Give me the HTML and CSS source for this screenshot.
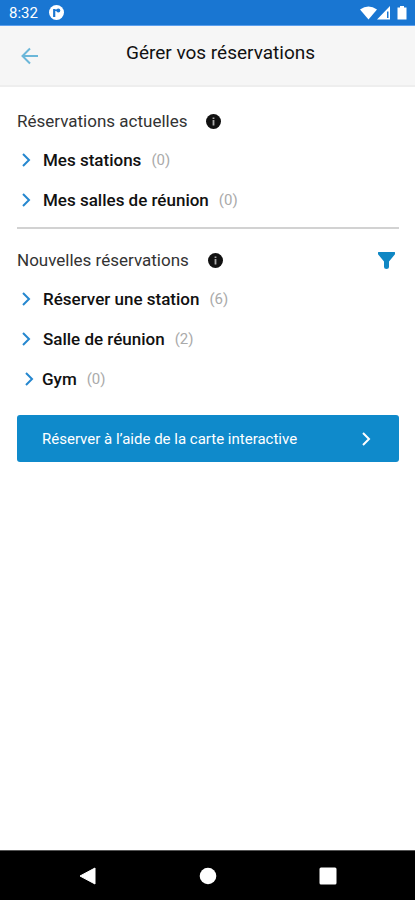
FILE: index.html
```html
<!DOCTYPE html>
<html lang="fr">
<head>
<meta charset="utf-8">
<meta name="viewport" content="width=device-width, initial-scale=1">
<title>Gérer vos réservations</title>
<link rel="stylesheet" href="styles.css">
</head>
<body>
<div class="status">
  <span class="time">8:32</span>
  <svg class="app-badge" width="15" height="15" viewBox="0 0 15 15"><circle cx="7.500" cy="7.500" r="7.500" fill="#fff"/><path d="M5.200 12V4" fill="none" stroke="#1976d2" stroke-width="2.200"/><path d="M6 5.200h2" stroke="#1976d2" stroke-width="1.500"/><circle cx="9.300" cy="5.600" r="2" fill="#1976d2"/></svg>
  <svg class="signals" width="48" height="14" viewBox="0 0 48 14" fill="#fff"><path d="M0 3.500Q8.500-2.500 17 3.500L8.500 13.500z"/><path d="M30 0V13.500H17zM27 5.500V12h1.500V5.500z" fill-rule="evenodd"/><path d="M40 0h4v1.500h2.500V13.500h-9V1.500H40z"/></svg>
</div>
<header class="header">
  <button class="back" type="button" aria-label="Retour"><svg width="18" height="18" viewBox="0 0 18 18"><path d="M17 9H2M9 1.500L1.500 9 9 16.500" fill="none" stroke="#6bb7d9" stroke-width="2"/></svg></button>
  <h1>Gérer vos réservations</h1>
</header>
<main>
  <section>
    <div class="heading">
      <h2>Réservations actuelles</h2>
      <button class="icon" type="button" aria-label="Informations"><svg width="15" height="15" viewBox="0 0 15 15"><circle cx="7.500" cy="7.500" r="7.500" fill="#111"/><path d="M7.500 3.500v1.500M7.500 6v5.500" fill="none" stroke="#aaa" stroke-width="1.800"/></svg></button>
    </div>
    <ul>
      <li><a href="#"><svg class="chevron" width="9" height="14" viewBox="0 0 9 14"><path d="M1 1l6 6-6 6"/></svg><b>Mes stations</b><span>(0)</span></a></li>
      <li><a href="#"><svg class="chevron" width="9" height="14" viewBox="0 0 9 14"><path d="M1 1l6 6-6 6"/></svg><b>Mes salles de réunion</b><span>(0)</span></a></li>
    </ul>
  </section>
  <hr>
  <section>
    <div class="heading">
      <h2>Nouvelles réservations</h2>
      <button class="icon" type="button" aria-label="Informations"><svg width="15" height="15" viewBox="0 0 15 15"><circle cx="7.500" cy="7.500" r="7.500" fill="#111"/><path d="M7.500 3.500v1.500M7.500 6v5.500" fill="none" stroke="#aaa" stroke-width="1.800"/></svg></button>
      <button class="icon filter" type="button" aria-label="Filtrer"><svg width="17" height="17" viewBox="0 0 17 17"><path d="M.5 0h16q.5 0 .5.500v1.700L11 9.500V15q0 2-2.500 2T6 15V9.500L0 2.200V.5Q0 0 .5 0z" fill="#0f87c4"/></svg></button>
    </div>
    <ul>
      <li><a href="#"><svg class="chevron" width="9" height="14" viewBox="0 0 9 14"><path d="M1 1l6 6-6 6"/></svg><b>Réserver une station</b><span>(6)</span></a></li>
      <li><a href="#"><svg class="chevron" width="9" height="14" viewBox="0 0 9 14"><path d="M1 1l6 6-6 6"/></svg><b>Salle de réunion</b><span>(2)</span></a></li>
      <li><a class="compact" href="#"><svg class="chevron" width="9" height="14" viewBox="0 0 9 14"><path d="M1 1l6 6-6 6"/></svg><b>Gym</b><span>(0)</span></a></li>
    </ul>
  </section>
  <button class="map" type="button">Réserver à l’aide de la carte interactive<svg class="chevron" width="9" height="14" viewBox="0 0 9 14"><path d="M1 1l6 6-6 6"/></svg></button>
</main>
<nav class="system">
  <button type="button" aria-label="Précédent"><svg width="18" height="18" viewBox="0 0 18 18"><path d="M16 1v16L1 9z" fill="#fff" stroke="#fff" stroke-linejoin="round"/></svg></button>
  <button type="button" aria-label="Accueil"><svg width="18" height="18" viewBox="0 0 18 18"><circle cx="9" cy="9" r="8.300" fill="#fff"/></svg></button>
  <button type="button" aria-label="Applications récentes"><svg width="18" height="18" viewBox="0 0 18 18"><rect x=".5" y=".5" width="17" height="17" rx="1.500" fill="#fff"/></svg></button>
</nav>
</body>
</html>
```
FILE: styles.css
```css
* { box-sizing: border-box; }
body {
  margin: 0;
  min-height: 100vh;
  display: flex;
  flex-direction: column;
  background: #fff;
  color: #111;
  font-family: Roboto, sans-serif;
  font-size: 16px;
}
button {
  padding: 0;
  border: 0;
  background: none;
  font: inherit;
  cursor: pointer;
}
svg { display: block; flex: none; }
h1, h2, ul { margin: 0; padding: 0; }
.status {
  display: flex;
  align-items: center;
  height: 26px;
  padding: 0 7px 0 9px;
  border-bottom: 1px solid #5b9fee;
  background: #1976d2;
  color: #fff;
}
.time { font-size: 15px; }
.app-badge { margin-left: 11px; }
.signals { margin-left: auto; }
.header {
  display: grid;
  grid-template-columns: 18px 1fr;
  align-items: center;
  height: 61px;
  padding: 0 13px 0 21px;
  border-bottom: 2px solid #eee;
  background: #f6f6f6;
}
h1 {
  padding-bottom: 6px;
  font-size: 19px;
  font-weight: 400;
  text-align: center;
}
main { flex: 1; padding: 15px 16px 15px 17px; }
.heading { display: flex; align-items: center; height: 38px; }
h2 {
  color: #333;
  font-size: 17px;
  font-weight: 400;
}
.icon { margin-left: 19px; }
.filter { margin-left: auto; margin-right: 4px; }
ul { list-style: none; }
li a {
  display: flex;
  align-items: center;
  height: 40px;
  padding-left: 5px;
  color: inherit;
  text-decoration: none;
}
li b {
  margin-left: 12px;
  font-size: 17px;
  font-weight: 500;
}
li span { margin-left: 10px; color: #aaa; font-size: 15px; }
li .compact { padding-left: 8px; }
.compact b { margin-left: 8px; }
.chevron {
  fill: none;
  stroke: #2587cf;
  stroke-width: 2;
}
hr {
  height: 2px;
  margin: 7px 0 12px;
  border: 0;
  background: #d2d2d2;
}
.map {
  display: flex;
  align-items: center;
  justify-content: space-between;
  width: 100%;
  height: 47px;
  margin-top: 16px;
  padding: 0 28px 0 25px;
  border-radius: 3px;
  background: #0f8acb;
  color: #fff;
  font-size: 15px;
}
.map .chevron { stroke: #fff; }
.system {
  display: flex;
  align-items: center;
  justify-content: center;
  gap: 102px;
  height: 50px;
  border-top: 1px solid #555;
  background: #000;
}
```
